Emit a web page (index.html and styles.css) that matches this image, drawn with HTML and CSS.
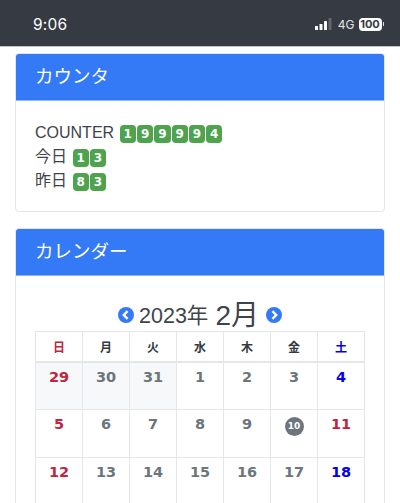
FILE: index.html
```html
<!DOCTYPE html>
<html lang="ja">
<head>
<meta charset="utf-8">
<title>カウンタ</title>
<link rel="stylesheet" href="styles.css">
</head>
<body>
<header class="status">
  <span class="time">9:06</span>
  <div class="status-right">
    <svg class="signal" width="18" height="12" viewBox="0 0 18 12"><rect x="0" y="8" width="3" height="4" rx="0.6" fill="#fff"/><rect x="4.5" y="6" width="3" height="6" rx="0.6" fill="#fff"/><rect x="9" y="3" width="3" height="9" rx="0.6" fill="#fff"/><rect x="13.5" y="0" width="3" height="12" rx="0.6" fill="#62656b"/></svg>
    <span class="net">4G</span>
    <span class="battery">100</span><span class="nub"></span>
  </div>
</header>
<main class="page">
  <section class="card">
    <h2 class="card-header">カウンタ</h2>
    <div class="card-body">
      <div class="count-row">COUNTER <span class="digits"><b>1</b><b>9</b><b>9</b><b>9</b><b>9</b><b>4</b></span></div>
      <div class="count-row">今日 <span class="digits"><b>1</b><b>3</b></span></div>
      <div class="count-row">昨日 <span class="digits"><b>8</b><b>3</b></span></div>
    </div>
  </section>
  <section class="card">
    <h2 class="card-header">カレンダー</h2>
    <div class="card-body">
      <div class="cal-title">
        <svg class="arrow" width="16" height="16" viewBox="0 0 16 16"><circle cx="8" cy="8" r="8" fill="#3479f6"/><path d="M9.6 4.2 5.8 8l3.8 3.8" fill="none" stroke="#fff" stroke-width="2.4"/></svg>
        <span class="year">2023年</span>
        <span class="month">2月</span>
        <svg class="arrow" width="16" height="16" viewBox="0 0 16 16"><circle cx="8" cy="8" r="8" fill="#3479f6"/><path d="M6.4 4.2 10.2 8l-3.8 3.8" fill="none" stroke="#fff" stroke-width="2.4"/></svg>
      </div>
      <table class="cal">
        <thead>
          <tr><th class="sun">日</th><th>月</th><th>火</th><th>水</th><th>木</th><th>金</th><th class="sat">土</th></tr>
        </thead>
        <tbody>
          <tr><td class="sun past">29</td><td class="past">30</td><td class="past">31</td><td>1</td><td>2</td><td>3</td><td class="sat">4</td></tr>
          <tr><td class="sun">5</td><td>6</td><td>7</td><td>8</td><td>9</td><td><span class="today">10</span></td><td class="sun">11</td></tr>
          <tr><td class="sun">12</td><td>13</td><td>14</td><td>15</td><td>16</td><td>17</td><td class="sat">18</td></tr>
        </tbody>
      </table>
    </div>
  </section>
</main>
</body>
</html>
```
FILE: styles.css
```css
* { box-sizing: border-box; }
html, body { margin: 0; height: 503px; overflow: hidden; }
body {
  background: #fff;
  color: #3e444a;
  font-family: "Liberation Sans", "Noto Sans CJK JP", sans-serif;
  font-size: 16px;
}
.status {
  height: 47px;
  background: #363a42;
  border-bottom: 1px solid #c4c5c7;
  display: flex;
  align-items: center;
  justify-content: space-between;
  padding: 2px 16px 0 33px;
  color: #fff;
}
.time { font-size: 15.5px; font-weight: 400; letter-spacing: 0.2px; font-family: "Inter", sans-serif; }
.status-right { display: flex; align-items: center; }
.signal { margin-right: 5px; }
.net { font-size: 12px; color: #e4e5e6; font-family: "Inter", sans-serif; margin-right: 4px; }
.battery {
  background: #fff;
  color: #363a42;
  border-radius: 4px;
  font: 700 11px/13px "Inter", sans-serif;
  width: 23px;
  height: 13px;
  text-align: center;
}
.nub { width: 1.5px; height: 4px; background: #d8d9da; margin-left: 1px; }
.page { padding: 6px 15px 0; }
.card {
  border: 1px solid #e3e4e7;
  border-radius: 4px;
  margin-bottom: 16px;
  overflow: hidden;
}
.card-header {
  margin: 0;
  height: 47px;
  padding: 0 19px;
  background: #3479f6;
  border-bottom: 1px solid #8fb6f8;
  color: #fff;
  font-size: 18.5px;
  font-weight: 400;
  line-height: 45px;
}
.card-body { padding: 20px 19px 18px; }
.count-row { height: 24px; line-height: 24px; display: flex; align-items: center; gap: 5.5px; }
.digits { display: inline-flex; gap: 1px; margin-top: 2px; }
.digits b {
  width: 16.3px;
  height: 18px;
  background: #4fa34f;
  border-radius: 4px;
  color: #fff;
  font: 700 12px/18px "DejaVu Sans", sans-serif;
  text-align: center;
}
.cal-title {
  height: 36px;
  margin-top: -1px;
  display: flex;
  align-items: center;
  justify-content: center;
  gap: 5px;
  font-size: 21.5px;
}
.month { font-size: 28px; margin: 0 2px; }
.arrow { margin-top: 4px; }
.cal {
  width: 330px;
  table-layout: fixed;
  border-collapse: collapse;
  color: #6c757d;
  font-family: "DejaVu Sans", "Noto Sans CJK JP", sans-serif;
}
.cal th, .cal td { border: 1px solid #e4e6ea; text-align: center; }
.cal th {
  height: 30px;
  font-size: 12px;
  font-weight: 700;
  color: #343a40;
  border-bottom-width: 2px;
  vertical-align: middle;
}
.cal td {
  height: 48px;
  font-size: 14.5px;
  font-weight: 700;
  vertical-align: top;
  padding-top: 6px;
}
.cal .sun { color: #c0243f; }
.cal .sat { color: #0000f0; }
.cal .past { background: #f7f8fa; }
.today {
  display: inline-block;
  width: 19px;
  height: 19px;
  border-radius: 50%;
  background: #6c757d;
  color: #fff;
  font-size: 9px;
  line-height: 19px;
}
```
